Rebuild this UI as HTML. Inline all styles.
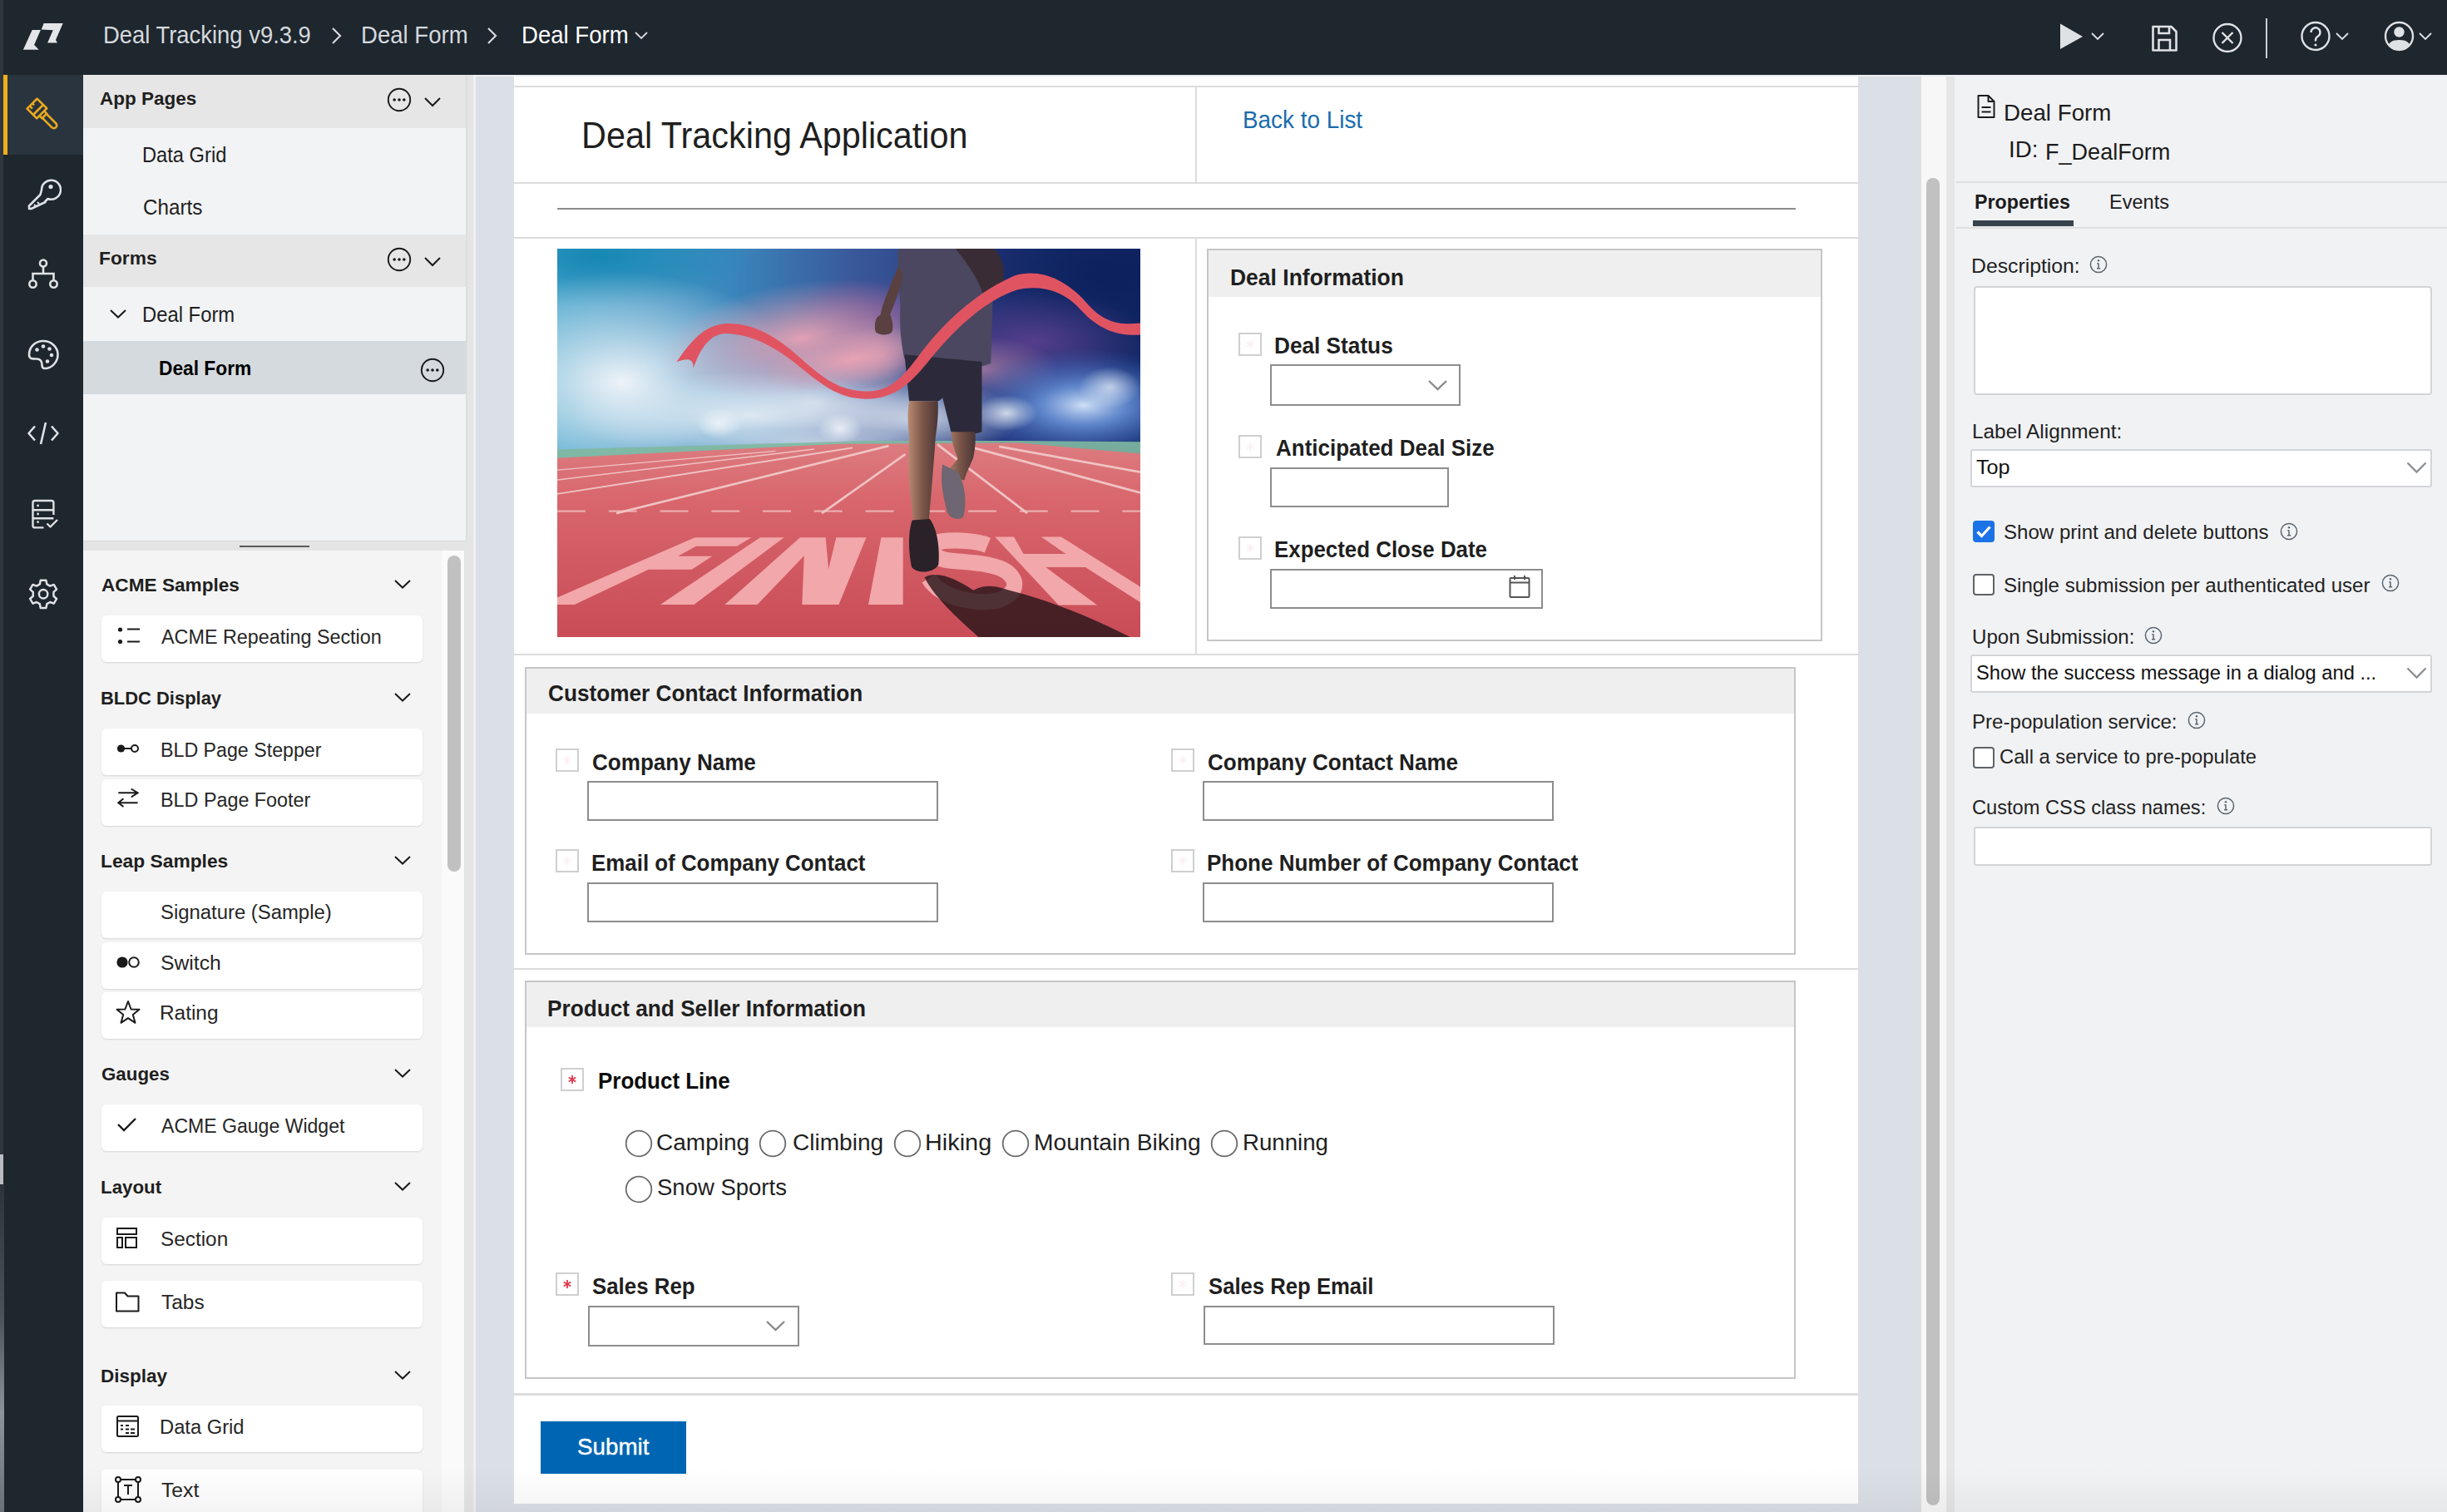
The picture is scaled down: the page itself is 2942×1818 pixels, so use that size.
<!DOCTYPE html>
<html><head><meta charset="utf-8"><style>
html,body{margin:0;padding:0;}
body{width:2942px;height:1818px;overflow:hidden;position:relative;background:#dbe0e6;font-family:"Liberation Sans", sans-serif;}
svg{display:block;}

</style></head><body>
<div style="position:absolute;left:0px;top:0px;width:2942px;height:1818px;background:#dbe0e6;"></div>
<div style="position:absolute;left:0px;top:0px;width:2942px;height:90px;background:#1e262e;"></div>
<svg style="position:absolute;left:20px;top:20px;" width="64" height="48" viewBox="0 0 64 48"><polygon fill="#e4e5e9" points="18.7,16 28.9,16 21.1,34 26.7,39.7 7.9,39.7"/><polygon fill="#e4e5e9" points="32.7,8.1 55.7,8.1 47,27.9 48.9,31.6 37.1,31.6 43.8,16.2 29.7,15.6"/></svg>
<div style="position:absolute;left:123.76px;top:28px;font-size:29px;font-weight:400;color:#d5d9dd;line-height:1;white-space:nowrap;transform:scaleX(0.9452);transform-origin:0 0;">Deal Tracking v9.3.9</div>
<svg style="position:absolute;left:396px;top:30px;" width="18" height="26" viewBox="0 0 18 26"><polyline points="4,4 13,13 4,22" fill="none" stroke="#d5d9dd" stroke-width="2.2"/></svg>
<div style="position:absolute;left:433.85px;top:28px;font-size:29px;font-weight:400;color:#d5d9dd;line-height:1;white-space:nowrap;transform:scaleX(0.9499);transform-origin:0 0;">Deal Form</div>
<svg style="position:absolute;left:583px;top:30px;" width="18" height="26" viewBox="0 0 18 26"><polyline points="4,4 13,13 4,22" fill="none" stroke="#d5d9dd" stroke-width="2.2"/></svg>
<div style="position:absolute;left:626.85px;top:28px;font-size:29px;font-weight:400;color:#ffffff;line-height:1;white-space:nowrap;transform:scaleX(0.9499);transform-origin:0 0;">Deal Form</div>
<svg style="position:absolute;left:762px;top:36px;" width="18" height="14" viewBox="0 0 18 14"><polyline points="2,3 9,10 16,3" fill="none" stroke="#d5d9dd" stroke-width="1.8"/></svg>
<svg style="position:absolute;left:2472px;top:24px;" width="40" height="40" viewBox="0 0 40 40"><polygon fill="#dfe2e5" points="5,4.6 32,20 5,35"/></svg>
<svg style="position:absolute;left:2512px;top:36px;" width="20" height="16" viewBox="0 0 20 16"><polyline points="3,4 10,11 17,4" fill="none" stroke="#dfe2e5" stroke-width="1.8"/></svg>
<svg style="position:absolute;left:2582px;top:26px;" width="40" height="40" viewBox="0 0 40 40"><path d="M6.5,6 H28.5 L34.5,12 V34.5 H6.5 Z" fill="none" stroke="#dfe2e5" stroke-width="2.6" stroke-linejoin="round"/><path d="M13.5,6 V14 H26 V6" fill="none" stroke="#dfe2e5" stroke-width="2.6"/><path d="M13.5,34.5 V22 H27 V34.5" fill="none" stroke="#dfe2e5" stroke-width="2.6"/></svg>
<svg style="position:absolute;left:2656px;top:24px;" width="44" height="44" viewBox="0 0 44 44"><circle cx="22" cy="21.5" r="16.5" fill="none" stroke="#dfe2e5" stroke-width="2.4"/><path d="M15.5,15 L28.5,28 M28.5,15 L15.5,28" stroke="#dfe2e5" stroke-width="2.4"/></svg>
<div style="position:absolute;left:2724px;top:22px;width:2px;height:48px;background:#c9cdd1;"></div>
<svg style="position:absolute;left:2762px;top:22px;" width="44" height="44" viewBox="0 0 44 44"><circle cx="22" cy="21.5" r="16.5" fill="none" stroke="#dfe2e5" stroke-width="2.4"/><path d="M16.5,17 a5.5,5.5 0 1 1 8.5,4.5 c-2,1.2 -3,2.2 -3,4.5 v1.5" fill="none" stroke="#dfe2e5" stroke-width="2.4"/><circle cx="22" cy="32" r="1.6" fill="#dfe2e5"/></svg>
<svg style="position:absolute;left:2806px;top:36px;" width="20" height="16" viewBox="0 0 20 16"><polyline points="3,4 10,11 17,4" fill="none" stroke="#dfe2e5" stroke-width="1.8"/></svg>
<svg style="position:absolute;left:2862px;top:22px;" width="44" height="44" viewBox="0 0 44 44"><defs><clipPath id="uc"><circle cx="22.5" cy="21.5" r="16"/></clipPath></defs><circle cx="22.5" cy="21.5" r="16.5" fill="none" stroke="#dfe2e5" stroke-width="2.4"/><circle cx="22.5" cy="16.5" r="6.2" fill="#dfe2e5"/><path clip-path="url(#uc)" d="M8,40 C8,29 14,26 22.5,26 C31,26 37,29 37,40 Z" fill="#dfe2e5"/></svg>
<svg style="position:absolute;left:2906px;top:36px;" width="20" height="16" viewBox="0 0 20 16"><polyline points="3,4 10,11 17,4" fill="none" stroke="#dfe2e5" stroke-width="1.8"/></svg>
<div style="position:absolute;left:0px;top:90px;width:100px;height:1728px;background:#1e262e;"></div>
<div style="position:absolute;left:0px;top:0px;width:4px;height:1818px;background:#2f373e;"></div>
<div style="position:absolute;left:0px;top:1388px;width:4px;height:36px;background:#b9bdc1;"></div>
<div style="position:absolute;left:0px;top:1424px;width:5px;height:394px;background:linear-gradient(to bottom,#2d3439 0%,#4a5258 40%,#8c949a 70%,#6a7278 100%);"></div>
<div style="position:absolute;left:8px;top:90px;width:92px;height:96px;background:#29343e;"></div>
<div style="position:absolute;left:4px;top:90px;width:5px;height:96px;background:#f0ad1c;"></div>
<svg style="position:absolute;left:30px;top:116px;" width="44" height="44" viewBox="0 0 44 44"><g transform="rotate(-45 22 22)" fill="none" stroke="#eaa91f" stroke-width="2.6" stroke-linejoin="round"><path d="M13.5,3 H30.5 V19.5 H13.5 Z"/><path d="M13.5,13.5 H30.5"/><path d="M18,19.5 V24 H26 V19.5"/><path d="M18.5,24 V40 a3.5,3.5 0 0 0 7,0 V24"/><path d="M18,3 V7.5 M22.5,3 V6"/></g></svg>
<svg style="position:absolute;left:30px;top:212px;" width="44" height="44" viewBox="0 0 44 44"><g fill="none" stroke="#dfe2e5" stroke-width="2.6" stroke-linejoin="round"><path d="M20,16.5 a11.5,11.5 0 1 1 7.5,10.5 L24.5,30 L24.5,31 L7.5,39 L5,39 L5,35.5 L18.5,22 Z"/></g><circle cx="31" cy="12.5" r="2.6" fill="#dfe2e5"/><path d="M11,34 L13,36 M15,31 L17,33" stroke="#dfe2e5" stroke-width="2"/></svg>
<svg style="position:absolute;left:30px;top:308px;" width="44" height="44" viewBox="0 0 44 44"><g fill="none" stroke="#dfe2e5" stroke-width="2.6"><circle cx="22" cy="8.5" r="4"/><circle cx="9.5" cy="33.5" r="4.2"/><circle cx="34.5" cy="33.5" r="4.2"/><path d="M22,12.5 V21 M9.5,29.3 V21 H34.5 V29.3"/></g></svg>
<svg style="position:absolute;left:30px;top:404px;" width="44" height="44" viewBox="0 0 44 44"><path d="M22,6 C31.5,6 39.5,13 39.5,22.5 C39.5,32 31.5,39 24,39 C21.5,39 20.5,37 20.5,35 C20.5,31 19,27.5 14,27.5 C10,27.5 5,28 5,22.5 C5,12.5 13,6 22,6 Z" fill="none" stroke="#dfe2e5" stroke-width="2.6" stroke-linejoin="round"/><g fill="#dfe2e5"><circle cx="14.5" cy="16.5" r="2.3"/><circle cx="22" cy="12.5" r="2.3"/><circle cx="29.5" cy="15.5" r="2.3"/><circle cx="32" cy="23" r="2.3"/><circle cx="27" cy="30.5" r="2.3"/></g></svg>
<svg style="position:absolute;left:30px;top:500px;" width="44" height="44" viewBox="0 0 44 44"><g fill="none" stroke="#dfe2e5" stroke-width="2.6" stroke-linejoin="round"><polyline points="12,12.5 4.5,21 12,29.5"/><polyline points="32,12.5 39.5,21 32,29.5"/><path d="M25,8 L19,34"/></g></svg>
<svg style="position:absolute;left:30px;top:596px;" width="44" height="44" viewBox="0 0 44 44"><g fill="none" stroke="#dfe2e5" stroke-width="2.4" stroke-linejoin="round"><path d="M34.4,23 V8.5 a2.5,2.5 0 0 0 -2.5,-2.5 H12 a2.5,2.5 0 0 0 -2.5,2.5 V35.9 a2.5,2.5 0 0 0 2.5,2.5 H22.5"/><path d="M9.5,17.3 H34.4 M9.5,27.3 H34.4"/><polyline points="26.5,33.5 30.5,37.5 39,29"/></g><g fill="#dfe2e5"><circle cx="15.6" cy="11.9" r="1.4"/><circle cx="15.6" cy="22" r="1.4"/><circle cx="15.6" cy="31.7" r="1.4"/></g></svg>
<svg style="position:absolute;left:30px;top:692px;" width="44" height="44" viewBox="0 0 44 44"><g transform="translate(22.1 22.3) scale(0.95) translate(-22 -22)" fill="none" stroke="#dfe2e5" stroke-width="2.6" stroke-linejoin="round"><path d="M18.5,4.5 H25.5 L26.5,9.5 L30.5,11.8 L35.3,10 L38.8,16 L35,19.4 V24.6 L38.8,28 L35.3,34 L30.5,32.2 L26.5,34.5 L25.5,39.5 H18.5 L17.5,34.5 L13.5,32.2 L8.7,34 L5.2,28 L9,24.6 V19.4 L5.2,16 L8.7,10 L13.5,11.8 L17.5,9.5 Z"/><circle cx="22" cy="22" r="5.5"/></g></svg>
<div style="position:absolute;left:100px;top:90px;width:470px;height:1728px;background:#e5e5e5;"></div>
<div style="position:absolute;left:569px;top:90px;width:3px;height:1728px;background:#eff0f2;"></div>
<div style="position:absolute;left:100px;top:90px;width:460px;height:560px;background:#f2f3f5;box-shadow:1px 0 3px rgba(0,0,0,0.06);"></div>
<div style="position:absolute;left:100px;top:90px;width:460px;height:63.5px;background:#e6e6e6;"></div>
<div style="position:absolute;left:100px;top:282px;width:460px;height:63px;background:#e6e6e6;"></div>
<div style="position:absolute;left:100px;top:410px;width:460px;height:64px;background:#d5dade;"></div>
<div style="position:absolute;left:120.10px;top:108px;font-size:22.5px;font-weight:700;color:#1f1f1f;line-height:1;white-space:nowrap;">App Pages</div>
<svg style="position:absolute;left:464px;top:104px;" width="32" height="32" viewBox="0 0 32 32"><circle cx="16" cy="16" r="13.2" fill="none" stroke="#1a1a1a" stroke-width="1.9"/><circle cx="10.2" cy="16" r="1.8" fill="#1a1a1a"/><circle cx="16" cy="16" r="1.8" fill="#1a1a1a"/><circle cx="21.8" cy="16" r="1.8" fill="#1a1a1a"/></svg>
<svg style="position:absolute;left:508px;top:114.5px;" width="24" height="15" viewBox="0 0 24 15"><polyline points="3.0,3.0 12.0,12.0 21.0,3.0" fill="none" stroke="#1a1a1a" stroke-width="2"/></svg>
<div style="position:absolute;left:170.81px;top:174px;font-size:25px;font-weight:400;color:#1f1f1f;line-height:1;white-space:nowrap;transform:scaleX(0.9470);transform-origin:0 0;">Data Grid</div>
<div style="position:absolute;left:171.54px;top:237px;font-size:25px;font-weight:400;color:#1f1f1f;line-height:1;white-space:nowrap;transform:scaleX(0.9688);transform-origin:0 0;">Charts</div>
<div style="position:absolute;left:119.08px;top:300px;font-size:22.5px;font-weight:700;color:#1f1f1f;line-height:1;white-space:nowrap;transform:scaleX(1.0128);transform-origin:0 0;">Forms</div>
<svg style="position:absolute;left:464px;top:296px;" width="32" height="32" viewBox="0 0 32 32"><circle cx="16" cy="16" r="13.2" fill="none" stroke="#1a1a1a" stroke-width="1.9"/><circle cx="10.2" cy="16" r="1.8" fill="#1a1a1a"/><circle cx="16" cy="16" r="1.8" fill="#1a1a1a"/><circle cx="21.8" cy="16" r="1.8" fill="#1a1a1a"/></svg>
<svg style="position:absolute;left:508px;top:306.5px;" width="24" height="15" viewBox="0 0 24 15"><polyline points="3.0,3.0 12.0,12.0 21.0,3.0" fill="none" stroke="#1a1a1a" stroke-width="2"/></svg>
<svg style="position:absolute;left:129.7px;top:369.7px;" width="24" height="14.5" viewBox="0 0 24 14.5"><polyline points="3.0,3.0 12.0,11.5 21.0,3.0" fill="none" stroke="#1a1a1a" stroke-width="2"/></svg>
<div style="position:absolute;left:170.79px;top:366px;font-size:25px;font-weight:400;color:#1f1f1f;line-height:1;white-space:nowrap;transform:scaleX(0.9526);transform-origin:0 0;">Deal Form</div>
<div style="position:absolute;left:191.12px;top:432px;font-size:23px;font-weight:700;color:#000;line-height:1;white-space:nowrap;transform:scaleX(0.9888);transform-origin:0 0;">Deal Form</div>
<svg style="position:absolute;left:504px;top:428.5px;" width="32" height="32" viewBox="0 0 32 32"><circle cx="16" cy="16" r="13.2" fill="none" stroke="#1a1a1a" stroke-width="1.9"/><circle cx="10.2" cy="16" r="1.8" fill="#1a1a1a"/><circle cx="16" cy="16" r="1.8" fill="#1a1a1a"/><circle cx="21.8" cy="16" r="1.8" fill="#1a1a1a"/></svg>
<div style="position:absolute;left:100px;top:650px;width:460px;height:12px;background:#e4e4e4;border-top:1px solid #d9d9d9;box-sizing:border-box;"></div>
<div style="position:absolute;left:288px;top:656px;width:84px;height:2px;background:#5a5a5a;"></div>
<div style="position:absolute;left:100px;top:662px;width:431px;height:1156px;background:#f4f4f4;"></div>
<div style="position:absolute;left:531px;top:662px;width:27px;height:1156px;background:#fafafa;"></div>
<div style="position:absolute;left:538px;top:668px;width:16px;height:380px;background:#c1c1c1;border-radius:8px;"></div>
<div style="position:absolute;left:122.00px;top:693px;font-size:22.5px;font-weight:700;color:#1f1f1f;line-height:1;white-space:nowrap;transform:scaleX(1.0053);transform-origin:0 0;">ACME Samples</div>
<svg style="position:absolute;left:471.5px;top:695px;" width="24" height="14.5" viewBox="0 0 24 14.5"><polyline points="3.0,3.0 12.0,11.5 21.0,3.0" fill="none" stroke="#1a1a1a" stroke-width="2"/></svg>
<div style="position:absolute;left:122px;top:740px;width:386px;height:56px;background:#ffffff;border-radius:6px;box-shadow:0 1px 2px rgba(0,0,0,0.13);"></div>
<svg style="position:absolute;left:138px;top:751px" width="36" height="28" viewBox="0 0 36 28"><circle cx="6.5" cy="6" r="2.6" fill="#1a1a1a"/><circle cx="6.5" cy="20.5" r="2.6" fill="#1a1a1a"/><path d="M15,5.5 H30 M15,20.5 H30" stroke="#1a1a1a" stroke-width="2"/></svg>
<div style="position:absolute;left:194.40px;top:755px;font-size:23.5px;font-weight:400;color:#262626;line-height:1;white-space:nowrap;transform:scaleX(0.9936);transform-origin:0 0;">ACME Repeating Section</div>
<div style="position:absolute;left:121.04px;top:829px;font-size:22.5px;font-weight:700;color:#1f1f1f;line-height:1;white-space:nowrap;transform:scaleX(0.9751);transform-origin:0 0;">BLDC Display</div>
<svg style="position:absolute;left:471.5px;top:831px;" width="24" height="14.5" viewBox="0 0 24 14.5"><polyline points="3.0,3.0 12.0,11.5 21.0,3.0" fill="none" stroke="#1a1a1a" stroke-width="2"/></svg>
<div style="position:absolute;left:122px;top:876.4px;width:386px;height:56px;background:#ffffff;border-radius:6px;box-shadow:0 1px 2px rgba(0,0,0,0.13);"></div>
<svg style="position:absolute;left:138px;top:889px" width="36" height="22" viewBox="0 0 36 22"><circle cx="7.5" cy="11" r="4.6" fill="#1a1a1a"/><path d="M11,11 H20" stroke="#1a1a1a" stroke-width="2"/><circle cx="24" cy="11" r="4" fill="none" stroke="#1a1a1a" stroke-width="2"/></svg>
<div style="position:absolute;left:192.52px;top:891px;font-size:23.5px;font-weight:400;color:#262626;line-height:1;white-space:nowrap;transform:scaleX(0.9874);transform-origin:0 0;">BLD Page Stepper</div>
<div style="position:absolute;left:122px;top:936.7px;width:386px;height:56px;background:#ffffff;border-radius:6px;box-shadow:0 1px 2px rgba(0,0,0,0.13);"></div>
<svg style="position:absolute;left:138px;top:944px" width="36" height="36" viewBox="0 0 36 36"><path d="M4.3,9.2 H27.6 M19.7,4.5 L27.6,9.2 L19.7,14.5 M27.6,21.2 H4.3 M10.4,16.3 L4.3,21.2 L10.4,26" fill="none" stroke="#1a1a1a" stroke-width="2"/></svg>
<div style="position:absolute;left:192.51px;top:951px;font-size:23.5px;font-weight:400;color:#262626;line-height:1;white-space:nowrap;transform:scaleX(0.9930);transform-origin:0 0;">BLD Page Footer</div>
<div style="position:absolute;left:120.98px;top:1025px;font-size:22.5px;font-weight:700;color:#1f1f1f;line-height:1;white-space:nowrap;transform:scaleX(1.0128);transform-origin:0 0;">Leap Samples</div>
<svg style="position:absolute;left:471.5px;top:1027px;" width="24" height="14.5" viewBox="0 0 24 14.5"><polyline points="3.0,3.0 12.0,11.5 21.0,3.0" fill="none" stroke="#1a1a1a" stroke-width="2"/></svg>
<div style="position:absolute;left:122px;top:1071.6px;width:386px;height:56px;background:#ffffff;border-radius:6px;box-shadow:0 1px 2px rgba(0,0,0,0.13);"></div>
<div style="position:absolute;left:193.38px;top:1086px;font-size:23.5px;font-weight:400;color:#262626;line-height:1;white-space:nowrap;transform:scaleX(1.0158);transform-origin:0 0;">Signature (Sample)</div>
<div style="position:absolute;left:122px;top:1132.5px;width:386px;height:56px;background:#ffffff;border-radius:6px;box-shadow:0 1px 2px rgba(0,0,0,0.13);"></div>
<svg style="position:absolute;left:138px;top:1145.5px" width="36" height="22" viewBox="0 0 36 22"><circle cx="9" cy="11" r="6.6" fill="#1a1a1a"/><circle cx="23" cy="11" r="5.8" fill="none" stroke="#1a1a1a" stroke-width="2"/></svg>
<div style="position:absolute;left:193.35px;top:1147px;font-size:23.5px;font-weight:400;color:#262626;line-height:1;white-space:nowrap;transform:scaleX(1.0503);transform-origin:0 0;">Switch</div>
<div style="position:absolute;left:122px;top:1192.8px;width:386px;height:56px;background:#ffffff;border-radius:6px;box-shadow:0 1px 2px rgba(0,0,0,0.13);"></div>
<svg style="position:absolute;left:138px;top:1201px" width="32" height="32" viewBox="0 0 32 32"><polygon points="16,3 19.6,12.5 29.5,12.8 21.8,19 24.5,28.8 16,23.2 7.5,28.8 10.2,19 2.5,12.8 12.4,12.5" fill="none" stroke="#1a1a1a" stroke-width="2" stroke-linejoin="round"/></svg>
<div style="position:absolute;left:192.43px;top:1207px;font-size:23.5px;font-weight:400;color:#262626;line-height:1;white-space:nowrap;transform:scaleX(1.0378);transform-origin:0 0;">Rating</div>
<div style="position:absolute;left:121.61px;top:1281px;font-size:22.5px;font-weight:700;color:#1f1f1f;line-height:1;white-space:nowrap;transform:scaleX(0.9924);transform-origin:0 0;">Gauges</div>
<svg style="position:absolute;left:471.5px;top:1282.8px;" width="24" height="14.5" viewBox="0 0 24 14.5"><polyline points="3.0,3.0 12.0,11.5 21.0,3.0" fill="none" stroke="#1a1a1a" stroke-width="2"/></svg>
<div style="position:absolute;left:122px;top:1328px;width:386px;height:56px;background:#ffffff;border-radius:6px;box-shadow:0 1px 2px rgba(0,0,0,0.13);"></div>
<svg style="position:absolute;left:138px;top:1340px" width="30" height="24" viewBox="0 0 30 24"><polyline points="4,12 11,19 25,5" fill="none" stroke="#1a1a1a" stroke-width="2.4"/></svg>
<div style="position:absolute;left:194.40px;top:1343px;font-size:23.5px;font-weight:400;color:#262626;line-height:1;white-space:nowrap;transform:scaleX(0.9812);transform-origin:0 0;">ACME Gauge Widget</div>
<div style="position:absolute;left:121.01px;top:1417px;font-size:22.5px;font-weight:700;color:#1f1f1f;line-height:1;white-space:nowrap;transform:scaleX(0.9922);transform-origin:0 0;">Layout</div>
<svg style="position:absolute;left:471.5px;top:1419px;" width="24" height="14.5" viewBox="0 0 24 14.5"><polyline points="3.0,3.0 12.0,11.5 21.0,3.0" fill="none" stroke="#1a1a1a" stroke-width="2"/></svg>
<div style="position:absolute;left:122px;top:1464px;width:386px;height:56px;background:#ffffff;border-radius:6px;box-shadow:0 1px 2px rgba(0,0,0,0.13);"></div>
<svg style="position:absolute;left:138px;top:1474px" width="30" height="30" viewBox="0 0 30 30"><rect x="3" y="3" width="23" height="7" fill="none" stroke="#1a1a1a" stroke-width="2"/><rect x="3" y="14" width="6" height="12" fill="none" stroke="#1a1a1a" stroke-width="2"/><rect x="13" y="14" width="13" height="12" fill="none" stroke="#1a1a1a" stroke-width="2"/></svg>
<div style="position:absolute;left:193.36px;top:1479px;font-size:23.5px;font-weight:400;color:#262626;line-height:1;white-space:nowrap;transform:scaleX(1.0354);transform-origin:0 0;">Section</div>
<div style="position:absolute;left:122px;top:1540px;width:386px;height:56px;background:#ffffff;border-radius:6px;box-shadow:0 1px 2px rgba(0,0,0,0.13);"></div>
<svg style="position:absolute;left:138px;top:1550px" width="32" height="30" viewBox="0 0 32 30"><path d="M2,4.5 H12 L15.5,8.5 H28.5 V26.5 H2 Z" fill="none" stroke="#1a1a1a" stroke-width="2" stroke-linejoin="round"/></svg>
<div style="position:absolute;left:193.88px;top:1555px;font-size:23.5px;font-weight:400;color:#262626;line-height:1;white-space:nowrap;transform:scaleX(1.0395);transform-origin:0 0;">Tabs</div>
<div style="position:absolute;left:121.00px;top:1644px;font-size:22.5px;font-weight:700;color:#1f1f1f;line-height:1;white-space:nowrap;">Display</div>
<svg style="position:absolute;left:471.5px;top:1645.5px;" width="24" height="14.5" viewBox="0 0 24 14.5"><polyline points="3.0,3.0 12.0,11.5 21.0,3.0" fill="none" stroke="#1a1a1a" stroke-width="2"/></svg>
<div style="position:absolute;left:122px;top:1690px;width:386px;height:56px;background:#ffffff;border-radius:6px;box-shadow:0 1px 2px rgba(0,0,0,0.13);"></div>
<svg style="position:absolute;left:138px;top:1700px" width="32" height="32" viewBox="0 0 32 32"><rect x="3" y="3" width="25" height="24" rx="1.5" fill="none" stroke="#1a1a1a" stroke-width="2"/><path d="M3,8.5 H28" stroke="#1a1a1a" stroke-width="2"/><path d="M7,14 H10 M13,14 H17 M7,18.5 H10 M13,18.5 H17 M19,18.5 H24 M13,23 H17 M19,23 H24" stroke="#1a1a1a" stroke-width="1.8"/></svg>
<div style="position:absolute;left:192.48px;top:1705px;font-size:23.5px;font-weight:400;color:#262626;line-height:1;white-space:nowrap;transform:scaleX(1.0093);transform-origin:0 0;">Data Grid</div>
<div style="position:absolute;left:122px;top:1766.6px;width:386px;height:56px;background:#ffffff;border-radius:6px;box-shadow:0 1px 2px rgba(0,0,0,0.13);"></div>
<svg style="position:absolute;left:137px;top:1774px" width="34" height="34" viewBox="0 0 34 34"><rect x="5" y="5" width="24" height="24" fill="none" stroke="#1a1a1a" stroke-width="2"/><g fill="#fff" stroke="#1a1a1a" stroke-width="2"><circle cx="5" cy="5" r="3"/><circle cx="29" cy="5" r="3"/><circle cx="5" cy="29" r="3"/><circle cx="29" cy="29" r="3"/></g><path d="M12,12 H22 M17,12 V23" stroke="#1a1a1a" stroke-width="2"/></svg>
<div style="position:absolute;left:193.87px;top:1781px;font-size:23.5px;font-weight:400;color:#262626;line-height:1;white-space:nowrap;transform:scaleX(1.0502);transform-origin:0 0;">Text</div>
<div style="position:absolute;left:572px;top:90px;width:2370px;height:2px;background:#e9edf2;"></div>
<div style="position:absolute;left:618px;top:92px;width:1616px;height:1716px;background:#ffffff;"></div>
<div style="position:absolute;left:618px;top:103px;width:1616px;height:2px;background:#dcdcdc;"></div>
<div style="position:absolute;left:1437px;top:105px;width:2px;height:115px;background:#dcdcdc;"></div>
<div style="position:absolute;left:618px;top:219px;width:1616px;height:2px;background:#dcdcdc;"></div>
<div style="position:absolute;left:670px;top:250px;width:1489px;height:2px;background:#8c8c8c;"></div>
<div style="position:absolute;left:618px;top:285px;width:1616px;height:2px;background:#dcdcdc;"></div>
<div style="position:absolute;left:1437px;top:287px;width:2px;height:500px;background:#dcdcdc;"></div>
<div style="position:absolute;left:618px;top:786px;width:1616px;height:2px;background:#dcdcdc;"></div>
<div style="position:absolute;left:618px;top:1163.5px;width:1616px;height:2px;background:#dcdcdc;"></div>
<div style="position:absolute;left:618px;top:1675px;width:1616px;height:3px;background:#dcdcdc;"></div>
<div style="position:absolute;left:698.77px;top:141px;font-size:44px;font-weight:400;color:#1f1f1f;line-height:1;white-space:nowrap;transform:scaleX(0.9402);transform-origin:0 0;">Deal Tracking Application</div>
<div style="position:absolute;left:1493.52px;top:129px;font-size:30px;font-weight:400;color:#1b6cae;line-height:1;white-space:nowrap;transform:scaleX(0.9292);transform-origin:0 0;">Back to List</div>
<svg style="position:absolute;left:670px;top:299px;overflow:hidden;" width="701" height="467" viewBox="0 0 2270 1512">
<defs>
 <linearGradient id="sky" x1="0" y1="0" x2="1" y2="0">
  <stop offset="0" stop-color="#4aa6cc"/><stop offset="0.3" stop-color="#3a86bc"/><stop offset="0.5" stop-color="#3a5a9c"/><stop offset="0.75" stop-color="#23367a"/><stop offset="1" stop-color="#142a68"/>
 </linearGradient>
 <radialGradient id="g1"><stop offset="0" stop-color="#eef3f8"/><stop offset="1" stop-color="#eef3f8" stop-opacity="0"/></radialGradient>
 <radialGradient id="g2"><stop offset="0" stop-color="#eba3b4" stop-opacity="0.95"/><stop offset="1" stop-color="#eba3b4" stop-opacity="0"/></radialGradient>
 <radialGradient id="g3"><stop offset="0" stop-color="#1587b3"/><stop offset="1" stop-color="#1587b3" stop-opacity="0"/></radialGradient>
 <radialGradient id="g4"><stop offset="0" stop-color="#0b205c"/><stop offset="1" stop-color="#0b205c" stop-opacity="0"/></radialGradient>
 <radialGradient id="g5"><stop offset="0" stop-color="#cfe0f6"/><stop offset="0.35" stop-color="#6f9ae0" stop-opacity="0.8"/><stop offset="1" stop-color="#3a64c0" stop-opacity="0"/></radialGradient>
 <radialGradient id="g6"><stop offset="0" stop-color="#5b3f8e" stop-opacity="0.9"/><stop offset="1" stop-color="#5b3f8e" stop-opacity="0"/></radialGradient>
 <radialGradient id="g7"><stop offset="0" stop-color="#4658a8" stop-opacity="0.95"/><stop offset="1" stop-color="#4658a8" stop-opacity="0"/></radialGradient>
 <linearGradient id="track" x1="0" y1="0" x2="0" y2="1"><stop offset="0" stop-color="#dc7c80"/><stop offset="0.3" stop-color="#d8666c"/><stop offset="1" stop-color="#c94c57"/></linearGradient>
 <linearGradient id="skin" x1="0" y1="0" x2="1" y2="0"><stop offset="0" stop-color="#b88a72"/><stop offset="0.5" stop-color="#7a5548"/><stop offset="1" stop-color="#4a3535"/></linearGradient>
</defs>
<rect width="2270" height="1512" fill="url(#sky)"/>
<ellipse cx="150" cy="30" rx="600" ry="200" fill="url(#g3)"/>
<ellipse cx="2150" cy="100" rx="700" ry="420" fill="url(#g4)"/>
<ellipse cx="1850" cy="360" rx="450" ry="200" fill="url(#g6)"/>
<ellipse cx="1250" cy="250" rx="350" ry="150" fill="url(#g6)" opacity="0.8"/>
<ellipse cx="250" cy="520" rx="700" ry="430" fill="url(#g1)"/>
<ellipse cx="750" cy="650" rx="700" ry="170" fill="url(#g1)" opacity="0.8"/>
<ellipse cx="1000" cy="600" rx="520" ry="220" fill="url(#g1)" opacity="0.75"/>
<ellipse cx="950" cy="350" rx="560" ry="220" fill="url(#g2)" transform="rotate(-8 950 350)"/>
<ellipse cx="1150" cy="430" rx="350" ry="110" fill="url(#g2)" transform="rotate(-10 1150 430)"/>
<ellipse cx="1650" cy="470" rx="300" ry="130" fill="url(#g2)" opacity="0.55"/>
<ellipse cx="2050" cy="610" rx="480" ry="220" fill="url(#g5)"/>
<ellipse cx="1750" cy="640" rx="120" ry="70" fill="url(#g1)" opacity="0.8"/>
<ellipse cx="2150" cy="540" rx="120" ry="80" fill="url(#g1)" opacity="0.7"/>
<ellipse cx="630" cy="680" rx="90" ry="60" fill="url(#g1)" opacity="0.9"/>
<ellipse cx="1100" cy="700" rx="90" ry="60" fill="url(#g1)" opacity="0.9"/>
<ellipse cx="1000" cy="760" rx="500" ry="60" fill="url(#g1)" opacity="0.6"/>
<ellipse cx="1420" cy="660" rx="380" ry="150" fill="url(#g1)" opacity="0.8"/>
<ellipse cx="1250" cy="420" rx="200" ry="160" fill="url(#g2)" opacity="0.6"/>
<polygon points="0,782 1200,748 1800,748 2270,752 2270,800 1800,790 0,818" fill="#80b8a0" opacity="0.9"/>
<polygon points="0,815 1100,760 1800,756 2270,798 2270,1512 0,1512" fill="url(#track)"/>
<g stroke="#f3cccc" stroke-width="9" opacity="0.9" fill="none">
 <line x1="230" y1="1030" x2="1290" y2="768"/>
 <line x1="1030" y1="1030" x2="1355" y2="800"/>
 <line x1="1830" y1="1030" x2="1480" y2="762"/>
 <line x1="2270" y1="950" x2="1620" y2="775"/>
 <line x1="2270" y1="870" x2="1720" y2="770"/>
 <line x1="0" y1="955" x2="1150" y2="775" stroke-width="6"/>
 <line x1="0" y1="900" x2="1000" y2="780" stroke-width="5"/>
 <line x1="0" y1="862" x2="850" y2="788" stroke-width="4"/>
</g>
<line x1="0" y1="1022" x2="2270" y2="1022" stroke="#f1c4c4" stroke-width="7" stroke-dasharray="110,90" opacity="0.75"/>
<g fill="#f2a7aa">
 <polygon points="536,1124 756,1124 699,1158 540,1158 470,1197.5 603,1197.5 524,1249 355,1249 67.5,1386 0,1386 0,1358"/>
 <polygon points="790,1124 883,1124 532,1386 401,1386"/>
 <polygon points="945,1124 1045,1124 1056,1247 1086,1124 1203,1124 1096,1386 953,1386 961,1195.5 779,1386 652,1386"/>
 <polygon points="1261,1124 1346,1124 1346,1386 1211,1386"/>
 <path d="M1675.6,1154.4 C1640,1140 1560,1130 1492.7,1140 C1450,1150 1450,1200 1510.6,1211.8 C1580,1222 1700,1220 1750.9,1258.4 C1790,1290 1800,1340 1715,1369.6 C1650,1385 1500,1370 1446.1,1283.5" fill="none" stroke="#f2a7aa" stroke-width="62"/>
 <polygon points="1704,1122 1778,1122 1815,1188.5 1980,1188.5 1884,1122 1962,1122 2270,1316 2270,1377 2056,1240.5 1902,1240.5 2102,1387.5 1952,1387.5"/>
</g>
<path d="M1430,1280 C1480,1250 1560,1290 1620,1330 C1680,1300 1720,1320 1760,1330 C1880,1360 2050,1420 2230,1512 L1640,1512 C1560,1440 1470,1360 1430,1280 Z" fill="#241418" opacity="0.8"/>
<g>
 <path d="M1327,0 L1560,0 C1600,30 1660,40 1700,60 L1688,447 C1620,470 1540,480 1481.6,472.7 L1352,430 C1330,330 1335,250 1335.5,215 C1330,120 1322,40 1327,0 Z" fill="#4c4760"/>
 <path d="M1550,0 L1700,0 C1745,40 1745,120 1730,155 C1700,185 1680,195 1662,189 C1640,120 1600,60 1550,0 Z" fill="#3a2c35"/>
 <path d="M1327,69 C1300,140 1270,200 1258,258 C1238,262 1232,300 1240,325 C1260,340 1300,338 1305,320 C1310,290 1300,270 1296,255 C1320,200 1340,140 1345,100 Z" fill="#5a4040"/>
 <path d="M1352,412 L1653,440 L1653,713 C1620,725 1560,725 1533,713 L1500,580 C1490,590 1485,593 1481.6,593 L1370,593 Z" fill="#2c2a3a"/>
 <path d="M1370,593 L1481.6,593 C1485,650 1478,700 1473,730 C1465,850 1455,960 1447,1057 L1387,1057 C1372,960 1362,850 1370,730 C1365,690 1362,640 1370,593 Z" fill="url(#skin)"/>
 <path d="M1533,713 L1627,713 C1630,760 1625,790 1619,816 C1600,860 1590,880 1585,902 L1507,880 C1530,850 1555,830 1559,816 C1545,780 1535,750 1533,713 Z" fill="url(#skin)"/>
 <path d="M1500,840 L1560,870 C1590,920 1595,1000 1580,1045 C1560,1060 1530,1050 1520,1030 C1500,960 1490,900 1500,840 Z" fill="#6e6672"/>
 <path d="M1382,1057 L1450,1052 C1480,1090 1490,1170 1484,1230 C1465,1262 1405,1268 1380,1240 C1366,1180 1366,1100 1382,1057 Z" fill="#2a2228"/>
</g>
<path d="M465,440 C520,360 570,300 650,292 C760,285 850,340 940,420 C1040,510 1100,552 1200,555 C1290,558 1340,510 1420,400 C1520,270 1650,160 1780,105 C1880,75 1980,120 2060,210 C2120,280 2180,300 2270,290 L2270,335 C2180,340 2110,315 2040,240 C1970,160 1880,140 1790,160 C1670,200 1560,300 1460,420 C1380,520 1320,585 1200,585 C1090,585 1020,520 920,440 C840,380 760,335 660,330 C600,328 560,380 530,465 C530,420 500,430 465,440 Z" fill="#e05462"/>
</svg>
<div style="position:absolute;box-sizing:border-box;left:1451px;top:299px;width:740px;height:472px;background:#fff;border:2px solid #c6c6c6;"></div>
<div style="position:absolute;left:1453px;top:301px;width:736px;height:55.5px;background:#efefef;"></div>
<div style="position:absolute;left:1479.34px;top:320px;font-size:28px;font-weight:700;color:#1f1f1f;line-height:1;white-space:nowrap;transform:scaleX(0.9458);transform-origin:0 0;">Deal Information</div>
<div style="position:absolute;box-sizing:border-box;left:1489px;top:399.5px;width:28px;height:28px;background:#fff;border:2px solid #cfcfcf;"></div>
<svg style="position:absolute;left:1495px;top:405.5px;" width="16" height="16" viewBox="0 0 16 16"><g stroke="#fcf1f2" stroke-width="1.8"><path d="M8,3 V13 M3.7,5.5 L12.3,10.5 M12.3,5.5 L3.7,10.5"/></g></svg>
<div style="position:absolute;left:1532.36px;top:403px;font-size:27px;font-weight:700;color:#1f1f1f;line-height:1;white-space:nowrap;transform:scaleX(0.9704);transform-origin:0 0;">Deal Status</div>
<div style="position:absolute;box-sizing:border-box;left:1527px;top:437.5px;width:229px;height:50px;background:#fff;border:2px solid #8d8d8d;"></div>
<svg style="position:absolute;left:1714.5px;top:454.5px;" width="27" height="16" viewBox="0 0 27 16"><polyline points="3,3 13.5,13 24,3" fill="none" stroke="#8a8a8a" stroke-width="2.4"/></svg>
<div style="position:absolute;box-sizing:border-box;left:1489px;top:522.5px;width:28px;height:28px;background:#fff;border:2px solid #cfcfcf;"></div>
<svg style="position:absolute;left:1495px;top:528.5px;" width="16" height="16" viewBox="0 0 16 16"><g stroke="#fcf1f2" stroke-width="1.8"><path d="M8,3 V13 M3.7,5.5 L12.3,10.5 M12.3,5.5 L3.7,10.5"/></g></svg>
<div style="position:absolute;left:1533.59px;top:526px;font-size:27px;font-weight:700;color:#1f1f1f;line-height:1;white-space:nowrap;transform:scaleX(0.9622);transform-origin:0 0;">Anticipated Deal Size</div>
<div style="position:absolute;box-sizing:border-box;left:1527px;top:561.5px;width:215px;height:48px;background:#fff;border:2px solid #8d8d8d;"></div>
<div style="position:absolute;box-sizing:border-box;left:1489px;top:644.5px;width:28px;height:28px;background:#fff;border:2px solid #cfcfcf;"></div>
<svg style="position:absolute;left:1495px;top:650.5px;" width="16" height="16" viewBox="0 0 16 16"><g stroke="#fcf1f2" stroke-width="1.8"><path d="M8,3 V13 M3.7,5.5 L12.3,10.5 M12.3,5.5 L3.7,10.5"/></g></svg>
<div style="position:absolute;left:1532.38px;top:648px;font-size:27px;font-weight:700;color:#1f1f1f;line-height:1;white-space:nowrap;transform:scaleX(0.9583);transform-origin:0 0;">Expected Close Date</div>
<div style="position:absolute;box-sizing:border-box;left:1527px;top:683.5px;width:328px;height:48px;background:#fff;border:2px solid #8d8d8d;"></div>
<svg style="position:absolute;left:1813px;top:690px;" width="28" height="31" viewBox="0 0 28 31"><g fill="none" stroke="#555" stroke-width="2"><rect x="2.5" y="5" width="23" height="23" rx="1"/><path d="M2.5,10.5 H25.5 M8,2 V7 M20,2 V7"/></g></svg>
<div style="position:absolute;box-sizing:border-box;left:631px;top:801.5px;width:1528px;height:346px;background:#fff;border:2px solid #c6c6c6;"></div>
<div style="position:absolute;left:633px;top:803.5px;width:1524px;height:54.5px;background:#efefef;"></div>
<div style="position:absolute;left:659.48px;top:820px;font-size:28px;font-weight:700;color:#1f1f1f;line-height:1;white-space:nowrap;transform:scaleX(0.9355);transform-origin:0 0;">Customer Contact Information</div>
<div style="position:absolute;box-sizing:border-box;left:668px;top:900px;width:28px;height:28px;background:#fff;border:2px solid #cfcfcf;"></div>
<svg style="position:absolute;left:674px;top:906px;" width="16" height="16" viewBox="0 0 16 16"><g stroke="#fcf1f2" stroke-width="1.8"><path d="M8,3 V13 M3.7,5.5 L12.3,10.5 M12.3,5.5 L3.7,10.5"/></g></svg>
<div style="position:absolute;left:712.09px;top:904px;font-size:27px;font-weight:700;color:#1f1f1f;line-height:1;white-space:nowrap;transform:scaleX(0.9647);transform-origin:0 0;">Company Name</div>
<div style="position:absolute;box-sizing:border-box;left:706px;top:938.5px;width:422px;height:48px;background:#fff;border:2px solid #8d8d8d;"></div>
<div style="position:absolute;box-sizing:border-box;left:668px;top:1021px;width:28px;height:28px;background:#fff;border:2px solid #cfcfcf;"></div>
<svg style="position:absolute;left:674px;top:1027px;" width="16" height="16" viewBox="0 0 16 16"><g stroke="#fcf1f2" stroke-width="1.8"><path d="M8,3 V13 M3.7,5.5 L12.3,10.5 M12.3,5.5 L3.7,10.5"/></g></svg>
<div style="position:absolute;left:711.28px;top:1025px;font-size:27px;font-weight:700;color:#1f1f1f;line-height:1;white-space:nowrap;transform:scaleX(0.9590);transform-origin:0 0;">Email of Company Contact</div>
<div style="position:absolute;box-sizing:border-box;left:706px;top:1060.5px;width:422px;height:48px;background:#fff;border:2px solid #8d8d8d;"></div>
<div style="position:absolute;box-sizing:border-box;left:1408px;top:900px;width:28px;height:28px;background:#fff;border:2px solid #cfcfcf;"></div>
<svg style="position:absolute;left:1414px;top:906px;" width="16" height="16" viewBox="0 0 16 16"><g stroke="#fcf1f2" stroke-width="1.8"><path d="M8,3 V13 M3.7,5.5 L12.3,10.5 M12.3,5.5 L3.7,10.5"/></g></svg>
<div style="position:absolute;left:1452.19px;top:904px;font-size:27px;font-weight:700;color:#1f1f1f;line-height:1;white-space:nowrap;transform:scaleX(0.9648);transform-origin:0 0;">Company Contact Name</div>
<div style="position:absolute;box-sizing:border-box;left:1446px;top:938.5px;width:422px;height:48px;background:#fff;border:2px solid #8d8d8d;"></div>
<div style="position:absolute;box-sizing:border-box;left:1408px;top:1021px;width:28px;height:28px;background:#fff;border:2px solid #cfcfcf;"></div>
<svg style="position:absolute;left:1414px;top:1027px;" width="16" height="16" viewBox="0 0 16 16"><g stroke="#fcf1f2" stroke-width="1.8"><path d="M8,3 V13 M3.7,5.5 L12.3,10.5 M12.3,5.5 L3.7,10.5"/></g></svg>
<div style="position:absolute;left:1451.37px;top:1025px;font-size:27px;font-weight:700;color:#1f1f1f;line-height:1;white-space:nowrap;transform:scaleX(0.9632);transform-origin:0 0;">Phone Number of Company Contact</div>
<div style="position:absolute;box-sizing:border-box;left:1446px;top:1060.5px;width:422px;height:48px;background:#fff;border:2px solid #8d8d8d;"></div>
<div style="position:absolute;box-sizing:border-box;left:631px;top:1178.5px;width:1528px;height:479px;background:#fff;border:2px solid #c6c6c6;"></div>
<div style="position:absolute;left:633px;top:1180.5px;width:1524px;height:54.5px;background:#efefef;"></div>
<div style="position:absolute;left:658.36px;top:1199px;font-size:28px;font-weight:700;color:#1f1f1f;line-height:1;white-space:nowrap;transform:scaleX(0.9358);transform-origin:0 0;">Product and Seller Information</div>
<div style="position:absolute;box-sizing:border-box;left:674px;top:1284px;width:28px;height:28px;background:#fff;border:2px solid #cfcfcf;"></div>
<svg style="position:absolute;left:680px;top:1290px;" width="16" height="16" viewBox="0 0 16 16"><g stroke="#e23c4f" stroke-width="1.8"><path d="M8,3 V13 M3.7,5.5 L12.3,10.5 M12.3,5.5 L3.7,10.5"/></g></svg>
<div style="position:absolute;left:718.88px;top:1287px;font-size:27px;font-weight:700;color:#0c0c0c;line-height:1;white-space:nowrap;transform:scaleX(0.9610);transform-origin:0 0;">Product Line</div>
<svg style="position:absolute;left:750.6px;top:1357.7px;" width="34" height="34" viewBox="0 0 34 34"><circle cx="17" cy="17" r="15.3" fill="#fff" stroke="#6a6a6a" stroke-width="1.8"/></svg>
<div style="position:absolute;left:789.19px;top:1361px;font-size:27px;font-weight:400;color:#1f1f1f;line-height:1;white-space:nowrap;transform:scaleX(1.0373);transform-origin:0 0;">Camping</div>
<svg style="position:absolute;left:912.3px;top:1357.7px;" width="34" height="34" viewBox="0 0 34 34"><circle cx="17" cy="17" r="15.3" fill="#fff" stroke="#6a6a6a" stroke-width="1.8"/></svg>
<div style="position:absolute;left:952.58px;top:1361px;font-size:27px;font-weight:400;color:#1f1f1f;line-height:1;white-space:nowrap;transform:scaleX(1.0396);transform-origin:0 0;">Climbing</div>
<svg style="position:absolute;left:1073.6px;top:1357.7px;" width="34" height="34" viewBox="0 0 34 34"><circle cx="17" cy="17" r="15.3" fill="#fff" stroke="#6a6a6a" stroke-width="1.8"/></svg>
<div style="position:absolute;left:1112.15px;top:1361px;font-size:27px;font-weight:400;color:#1f1f1f;line-height:1;white-space:nowrap;transform:scaleX(1.0686);transform-origin:0 0;">Hiking</div>
<svg style="position:absolute;left:1204px;top:1357.7px;" width="34" height="34" viewBox="0 0 34 34"><circle cx="17" cy="17" r="15.3" fill="#fff" stroke="#6a6a6a" stroke-width="1.8"/></svg>
<div style="position:absolute;left:1242.60px;top:1361px;font-size:27px;font-weight:400;color:#1f1f1f;line-height:1;white-space:nowrap;transform:scaleX(1.0441);transform-origin:0 0;">Mountain Biking</div>
<svg style="position:absolute;left:1455.4px;top:1357.7px;" width="34" height="34" viewBox="0 0 34 34"><circle cx="17" cy="17" r="15.3" fill="#fff" stroke="#6a6a6a" stroke-width="1.8"/></svg>
<div style="position:absolute;left:1493.64px;top:1361px;font-size:27px;font-weight:400;color:#1f1f1f;line-height:1;white-space:nowrap;transform:scaleX(1.0232);transform-origin:0 0;">Running</div>
<svg style="position:absolute;left:750.6px;top:1412.7px;" width="34" height="34" viewBox="0 0 34 34"><circle cx="17" cy="17" r="15.3" fill="#fff" stroke="#6a6a6a" stroke-width="1.8"/></svg>
<div style="position:absolute;left:789.64px;top:1415px;font-size:27px;font-weight:400;color:#1f1f1f;line-height:1;white-space:nowrap;transform:scaleX(1.0186);transform-origin:0 0;">Snow Sports</div>
<div style="position:absolute;box-sizing:border-box;left:668.4px;top:1530px;width:28px;height:28px;background:#fff;border:2px solid #cfcfcf;"></div>
<svg style="position:absolute;left:674.4px;top:1536px;" width="16" height="16" viewBox="0 0 16 16"><g stroke="#e23c4f" stroke-width="1.8"><path d="M8,3 V13 M3.7,5.5 L12.3,10.5 M12.3,5.5 L3.7,10.5"/></g></svg>
<div style="position:absolute;left:711.60px;top:1534px;font-size:27px;font-weight:700;color:#1f1f1f;line-height:1;white-space:nowrap;transform:scaleX(0.9572);transform-origin:0 0;">Sales Rep</div>
<div style="position:absolute;box-sizing:border-box;left:706.7px;top:1569.8px;width:254px;height:49px;background:#fff;border:2px solid #8d8d8d;"></div>
<svg style="position:absolute;left:918.5px;top:1586px;" width="27" height="16" viewBox="0 0 27 16"><polyline points="3,3 13.5,13 24,3" fill="none" stroke="#8a8a8a" stroke-width="2.4"/></svg>
<div style="position:absolute;box-sizing:border-box;left:1408px;top:1530px;width:28px;height:28px;background:#fff;border:2px solid #cfcfcf;"></div>
<svg style="position:absolute;left:1414px;top:1536px;" width="16" height="16" viewBox="0 0 16 16"><g stroke="#fcf1f2" stroke-width="1.8"><path d="M8,3 V13 M3.7,5.5 L12.3,10.5 M12.3,5.5 L3.7,10.5"/></g></svg>
<div style="position:absolute;left:1452.60px;top:1534px;font-size:27px;font-weight:700;color:#1f1f1f;line-height:1;white-space:nowrap;transform:scaleX(0.9512);transform-origin:0 0;">Sales Rep Email</div>
<div style="position:absolute;box-sizing:border-box;left:1446.6px;top:1569.8px;width:422px;height:47px;background:#fff;border:2px solid #8d8d8d;"></div>
<div style="position:absolute;left:650px;top:1709px;width:175px;height:63px;background:#0066b3;"></div>
<div style="position:absolute;left:693.73px;top:1726px;font-size:27.5px;font-weight:400;color:#ffffff;line-height:1;white-space:nowrap;transform:scaleX(1.0092);transform-origin:0 0;-webkit-text-stroke:0.4px #ffffff;">Submit</div>
<div style="position:absolute;left:2310px;top:92px;width:30px;height:1726px;background:#f7f7f7;"></div>
<div style="position:absolute;left:2316px;top:214px;width:16px;height:1596px;background:#c1c1c1;border-radius:8px;"></div>
<div style="position:absolute;left:2340px;top:90px;width:10px;height:1728px;background:#e6e6e6;"></div>
<div style="position:absolute;left:2350px;top:90px;width:592px;height:1728px;background:#f1f2f4;"></div>
<div style="position:absolute;left:2340px;top:90px;width:602px;height:2px;background:#e9edf2;"></div>
<svg style="position:absolute;left:2374px;top:112px;" width="28" height="32" viewBox="0 0 28 32"><path d="M4.5,3 H16.5 L23.5,10 V29 H4.5 Z M16.5,3 V10 H23.5" fill="none" stroke="#1c1c1c" stroke-width="2" stroke-linejoin="round"/><path d="M8.5,17 H19.5 M8.5,22.5 H19.5" stroke="#1c1c1c" stroke-width="2"/></svg>
<div style="position:absolute;left:2408.63px;top:121px;font-size:28.5px;font-weight:400;color:#1c1c1c;line-height:1;white-space:nowrap;transform:scaleX(0.9728);transform-origin:0 0;">Deal Form</div>
<div style="position:absolute;left:2414.84px;top:167px;font-size:27px;font-weight:400;color:#1c1c1c;line-height:1;white-space:nowrap;transform:scaleX(1.0249);transform-origin:0 0;">ID:</div>
<div style="position:absolute;left:2458.89px;top:168px;font-size:28.5px;font-weight:400;color:#1c1c1c;line-height:1;white-space:nowrap;transform:scaleX(0.9492);transform-origin:0 0;">F_DealForm</div>
<div style="position:absolute;left:2352px;top:217.5px;width:590px;height:2px;background:#dfe0e2;"></div>
<div style="position:absolute;left:2374.48px;top:231px;font-size:24.5px;font-weight:700;color:#1c1c1c;line-height:1;white-space:nowrap;transform:scaleX(0.9481);transform-origin:0 0;">Properties</div>
<div style="position:absolute;left:2536.08px;top:231px;font-size:24.5px;font-weight:400;color:#1c1c1c;line-height:1;white-space:nowrap;transform:scaleX(0.9604);transform-origin:0 0;">Events</div>
<div style="position:absolute;left:2352px;top:272.5px;width:590px;height:2px;background:#dfe0e2;"></div>
<div style="position:absolute;left:2372px;top:265px;width:121px;height:7px;background:#36424c;"></div>
<div style="position:absolute;left:2370.48px;top:308px;font-size:24.5px;font-weight:400;color:#222;line-height:1;white-space:nowrap;transform:scaleX(1.0108);transform-origin:0 0;">Description:</div>
<svg style="position:absolute;left:2511px;top:305.5px;" width="24" height="24" viewBox="0 0 24 24"><circle cx="12" cy="12" r="9.6" fill="none" stroke="#5b6670" stroke-width="1.5"/><path d="M12,10.5 V16.5 M10,16.8 H14.2 M10.3,10.7 H12" stroke="#5b6670" stroke-width="1.5"/><circle cx="12" cy="7.3" r="1.2" fill="#5b6670"/></svg>
<div style="position:absolute;box-sizing:border-box;left:2372.5px;top:344px;width:551px;height:130.5px;background:#fff;border:2px solid #d2d4d7;border-radius:4px;"></div>
<div style="position:absolute;left:2370.61px;top:507px;font-size:24.5px;font-weight:400;color:#222;line-height:1;white-space:nowrap;transform:scaleX(0.9950);transform-origin:0 0;">Label Alignment:</div>
<div style="position:absolute;box-sizing:border-box;left:2369px;top:540px;width:554.5px;height:46px;background:#fff;border:2px solid #d2d4d7;border-radius:3px;"></div>
<div style="position:absolute;left:2376.49px;top:550px;font-size:24.5px;font-weight:400;color:#111;line-height:1;white-space:nowrap;transform:scaleX(1.0270);transform-origin:0 0;">Top</div>
<svg style="position:absolute;left:2892px;top:554px;" width="27" height="17" viewBox="0 0 27 17"><polyline points="2.5,2.5 13.5,13.5 24.5,2.5" fill="none" stroke="#8c8f93" stroke-width="2.4"/></svg>
<div style="position:absolute;left:2372px;top:626px;width:26px;height:26px;background:#1b73e6;border-radius:4px;"></div>
<svg style="position:absolute;left:2372px;top:626px;" width="26" height="26" viewBox="0 0 26 26"><polyline points="5.5,13.5 10.5,18.5 20.5,7.5" fill="none" stroke="#fff" stroke-width="3.2"/></svg>
<div style="position:absolute;left:2409.32px;top:628px;font-size:24.5px;font-weight:400;color:#222;line-height:1;white-space:nowrap;transform:scaleX(0.9826);transform-origin:0 0;">Show print and delete buttons</div>
<svg style="position:absolute;left:2740px;top:626.5px;" width="24" height="24" viewBox="0 0 24 24"><circle cx="12" cy="12" r="9.6" fill="none" stroke="#5b6670" stroke-width="1.5"/><path d="M12,10.5 V16.5 M10,16.8 H14.2 M10.3,10.7 H12" stroke="#5b6670" stroke-width="1.5"/><circle cx="12" cy="7.3" r="1.2" fill="#5b6670"/></svg>
<div style="position:absolute;box-sizing:border-box;left:2372px;top:689.5px;width:26px;height:26px;background:#fff;border:2px solid #5f6368;border-radius:4px;"></div>
<div style="position:absolute;left:2409.32px;top:692px;font-size:24.5px;font-weight:400;color:#222;line-height:1;white-space:nowrap;transform:scaleX(0.9832);transform-origin:0 0;">Single submission per authenticated user</div>
<svg style="position:absolute;left:2862px;top:689px;" width="24" height="24" viewBox="0 0 24 24"><circle cx="12" cy="12" r="9.6" fill="none" stroke="#5b6670" stroke-width="1.5"/><path d="M12,10.5 V16.5 M10,16.8 H14.2 M10.3,10.7 H12" stroke="#5b6670" stroke-width="1.5"/><circle cx="12" cy="7.3" r="1.2" fill="#5b6670"/></svg>
<div style="position:absolute;left:2370.83px;top:754px;font-size:24.5px;font-weight:400;color:#222;line-height:1;white-space:nowrap;transform:scaleX(0.9825);transform-origin:0 0;">Upon Submission:</div>
<svg style="position:absolute;left:2577px;top:752px;" width="24" height="24" viewBox="0 0 24 24"><circle cx="12" cy="12" r="9.6" fill="none" stroke="#5b6670" stroke-width="1.5"/><path d="M12,10.5 V16.5 M10,16.8 H14.2 M10.3,10.7 H12" stroke="#5b6670" stroke-width="1.5"/><circle cx="12" cy="7.3" r="1.2" fill="#5b6670"/></svg>
<div style="position:absolute;box-sizing:border-box;left:2369px;top:787px;width:554.5px;height:46px;background:#fff;border:2px solid #d2d4d7;border-radius:3px;"></div>
<div style="position:absolute;left:2375.94px;top:797px;font-size:24.5px;font-weight:400;color:#111;line-height:1;white-space:nowrap;transform:scaleX(0.9680);transform-origin:0 0;">Show the success message in a dialog and ...</div>
<svg style="position:absolute;left:2892px;top:801px;" width="27" height="17" viewBox="0 0 27 17"><polyline points="2.5,2.5 13.5,13.5 24.5,2.5" fill="none" stroke="#8c8f93" stroke-width="2.4"/></svg>
<div style="position:absolute;left:2370.63px;top:856px;font-size:24.5px;font-weight:400;color:#222;line-height:1;white-space:nowrap;transform:scaleX(0.9839);transform-origin:0 0;">Pre-population service:</div>
<svg style="position:absolute;left:2628.5px;top:854px;" width="24" height="24" viewBox="0 0 24 24"><circle cx="12" cy="12" r="9.6" fill="none" stroke="#5b6670" stroke-width="1.5"/><path d="M12,10.5 V16.5 M10,16.8 H14.2 M10.3,10.7 H12" stroke="#5b6670" stroke-width="1.5"/><circle cx="12" cy="7.3" r="1.2" fill="#5b6670"/></svg>
<div style="position:absolute;box-sizing:border-box;left:2372px;top:897.5px;width:26px;height:26px;background:#fff;border:2px solid #5f6368;border-radius:4px;"></div>
<div style="position:absolute;left:2403.64px;top:898px;font-size:24.5px;font-weight:400;color:#222;line-height:1;white-space:nowrap;transform:scaleX(0.9695);transform-origin:0 0;">Call a service to pre-populate</div>
<div style="position:absolute;left:2371.44px;top:959px;font-size:24.5px;font-weight:400;color:#222;line-height:1;white-space:nowrap;transform:scaleX(0.9651);transform-origin:0 0;">Custom CSS class names:</div>
<svg style="position:absolute;left:2664px;top:956.5px;" width="24" height="24" viewBox="0 0 24 24"><circle cx="12" cy="12" r="9.6" fill="none" stroke="#5b6670" stroke-width="1.5"/><path d="M12,10.5 V16.5 M10,16.8 H14.2 M10.3,10.7 H12" stroke="#5b6670" stroke-width="1.5"/><circle cx="12" cy="7.3" r="1.2" fill="#5b6670"/></svg>
<div style="position:absolute;box-sizing:border-box;left:2372.5px;top:994px;width:551px;height:46.5px;background:#fff;border:2px solid #d2d4d7;border-radius:3px;"></div>
<div style="position:absolute;left:100px;top:1765px;width:2842px;height:53px;background:linear-gradient(to bottom, rgba(0,0,0,0), rgba(0,0,0,0.045));pointer-events:none;"></div>
</body></html>
